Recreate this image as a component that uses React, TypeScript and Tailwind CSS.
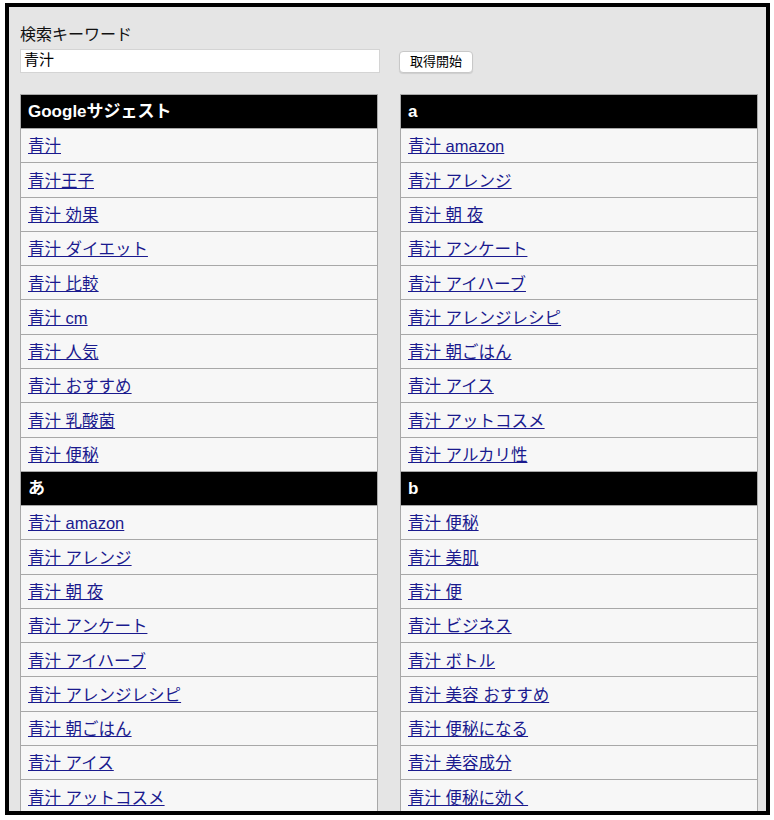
import React from 'react'

interface Section {
  title: string;
  items: string[];
}

const left: Section[] = [
  {
    title: 'Googleサジェスト',
    items: ['青汁', '青汁王子', '青汁 効果', '青汁 ダイエット', '青汁 比較', '青汁 cm', '青汁 人気', '青汁 おすすめ', '青汁 乳酸菌', '青汁 便秘'],
  },
  {
    title: 'あ',
    items: ['青汁 amazon', '青汁 アレンジ', '青汁 朝 夜', '青汁 アンケート', '青汁 アイハーブ', '青汁 アレンジレシピ', '青汁 朝ごはん', '青汁 アイス', '青汁 アットコスメ'],
  },
]

const right: Section[] = [
  {
    title: 'a',
    items: ['青汁 amazon', '青汁 アレンジ', '青汁 朝 夜', '青汁 アンケート', '青汁 アイハーブ', '青汁 アレンジレシピ', '青汁 朝ごはん', '青汁 アイス', '青汁 アットコスメ', '青汁 アルカリ性'],
  },
  {
    title: 'b',
    items: ['青汁 便秘', '青汁 美肌', '青汁 便', '青汁 ビジネス', '青汁 ボトル', '青汁 美容 おすすめ', '青汁 便秘になる', '青汁 美容成分', '青汁 便秘に効く'],
  },
]

const SuggestColumn = ({ sections }: { sections: Section[] }) => (
  <div className="border-x border-t border-[#a8a8a8]">
    {sections.map((s, i) => (
      <div key={i}>
        <div className="h-[34px] bg-black border-b border-[#a8a8a8] flex items-center px-[7px] pt-[1px] text-white font-bold text-[17px]">
          {s.title}
        </div>
        {s.items.map((item, j) => (
          <div key={j} className="h-[34.3px] bg-[#f7f7f7] border-b border-[#a8a8a8] flex items-center pl-[7px] pt-[2px]">
            <a href="#" className="text-[#1a1a8e] underline text-[16.5px] leading-none">{item}</a>
          </div>
        ))}
      </div>
    ))}
  </div>
)

const App: React.FC = () => {
  return (
    <div className="w-[774px] h-[820px] bg-white pt-[3px] pl-[5px]" style={{ fontFamily: '"Liberation Sans", "Noto Sans CJK JP", sans-serif' }}>
      <div className="w-[765px] h-[812px] border-4 border-black bg-[#e5e5e5] overflow-hidden">
        <div className="pl-[11px] pr-[8px] pt-[17px]">
          <div className="text-[16px] text-[#111] leading-[21px]">検索キーワード</div>
          <div className="flex items-center mt-[3px] gap-[19px]">
            <div className="w-[360px] h-[24px] bg-white border border-[#d4d4d4] flex items-center px-[3px] text-[15px] text-black">
              青汁
            </div>
            <button className="h-[22px] px-[10px] bg-white border border-[#c8c8c8] rounded-[4px] text-[13px] text-black flex items-center mt-[3px] shadow-[0_1px_1px_rgba(0,0,0,0.1)]">
              取得開始
            </button>
          </div>
          <div className="grid grid-cols-[358px_358px] gap-[22px] mt-[21px]">
            <SuggestColumn sections={left} />
            <SuggestColumn sections={right} />
          </div>
        </div>
      </div>
    </div>
  )
}

export default App
